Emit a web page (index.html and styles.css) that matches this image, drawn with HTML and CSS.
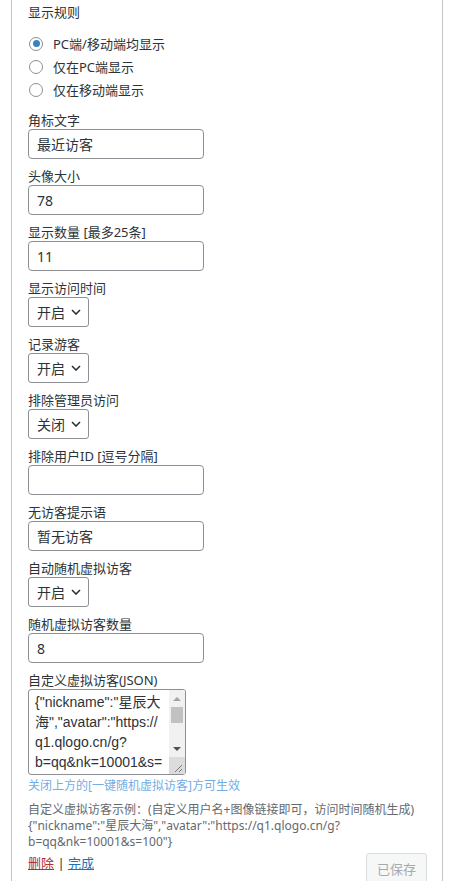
FILE: index.html
```html
<!DOCTYPE html>
<html lang="zh-CN">
<head>
    <meta charset="UTF-8">
    <meta name="viewport" content="width=device-width, initial-scale=1.0">
    <title>最近访客 小工具</title>
    <link rel="stylesheet" href="styles.css">
</head>
<body>
    <div class="widget-inside">
        <div class="title">显示规则</div>
        <div class="radios">
            <label class="radio-row"><input type="radio" name="rule" checked> PC端/移动端均显示</label>
            <label class="radio-row"><input type="radio" name="rule"> 仅在PC端显示</label>
            <label class="radio-row"><input type="radio" name="rule"> 仅在移动端显示</label>
        </div>

        <div class="field">
            <label for="badge">角标文字</label>
            <input type="text" id="badge" value="最近访客">
        </div>
        <div class="field">
            <label for="avatar-size">头像大小</label>
            <input type="text" id="avatar-size" value="78">
        </div>
        <div class="field">
            <label for="count">显示数量 [最多25条]</label>
            <input type="text" id="count" value="11">
        </div>
        <div class="field">
            <label for="show-time">显示访问时间</label>
            <span class="select-wrap">
                <select id="show-time"><option>开启</option><option>关闭</option></select>
                <svg class="chevron" width="10" height="6" viewBox="0 0 10 6"><path d="M1 1 L5 5 L9 1" fill="none" stroke="#2c3338" stroke-width="1.6"/></svg>
            </span>
        </div>
        <div class="field">
            <label for="guests">记录游客</label>
            <span class="select-wrap">
                <select id="guests"><option>开启</option><option>关闭</option></select>
                <svg class="chevron" width="10" height="6" viewBox="0 0 10 6"><path d="M1 1 L5 5 L9 1" fill="none" stroke="#2c3338" stroke-width="1.6"/></svg>
            </span>
        </div>
        <div class="field">
            <label for="exclude-admin">排除管理员访问</label>
            <span class="select-wrap">
                <select id="exclude-admin"><option>关闭</option><option>开启</option></select>
                <svg class="chevron" width="10" height="6" viewBox="0 0 10 6"><path d="M1 1 L5 5 L9 1" fill="none" stroke="#2c3338" stroke-width="1.6"/></svg>
            </span>
        </div>
        <div class="field">
            <label for="exclude-ids">排除用户ID [逗号分隔]</label>
            <input type="text" id="exclude-ids" value="">
        </div>
        <div class="field">
            <label for="empty-text">无访客提示语</label>
            <input type="text" id="empty-text" value="暂无访客">
        </div>
        <div class="field">
            <label for="auto-fake">自动随机虚拟访客</label>
            <span class="select-wrap">
                <select id="auto-fake"><option>开启</option><option>关闭</option></select>
                <svg class="chevron" width="10" height="6" viewBox="0 0 10 6"><path d="M1 1 L5 5 L9 1" fill="none" stroke="#2c3338" stroke-width="1.6"/></svg>
            </span>
        </div>
        <div class="field">
            <label for="fake-count">随机虚拟访客数量</label>
            <input type="text" id="fake-count" value="8">
        </div>
        <div class="field last">
            <label for="fake-json">自定义虚拟访客(JSON)</label>
            <div class="textarea-wrap">
                <textarea id="fake-json">{"nickname":"星辰大海","avatar":"https://&#8203;q1.qlogo.cn/g?b=qq&amp;nk=10001&amp;s=100"},{"nickname":"明月","avatar":"https://&#8203;q1.qlogo.cn/g?b=qq&amp;nk=10002&amp;s=100"}</textarea>
                <!-- the browser hides native scrollbars, so draw the classic one -->
                <div class="scrollbar">
                    <div class="sb-btn"><span class="arrow-up"></span></div>
                    <div class="sb-thumb"></div>
                    <div class="sb-track"></div>
                    <div class="sb-btn"><span class="arrow-down"></span></div>
                    <div class="sb-corner">
                        <svg width="16" height="17" viewBox="0 0 16 17"><path d="M13 8 L6 15 M13 12 L10 15" stroke="#7a7a7a" stroke-width="1"/></svg>
                    </div>
                </div>
            </div>
        </div>
        <div class="hint">关闭上方的[一键随机虚拟访客]方可生效</div>
        <div class="desc">自定义虚拟访客示例：(自定义用户名+图像链接即可，访问时间随机生成)<br>{"nickname":"星辰大海","avatar":"https://q1.qlogo.cn/g?<br>b=qq&amp;nk=10001&amp;s=100"}</div>

        <div class="control-row">
            <div class="links"><a href="#" class="delete">删除</a> | <a href="#" class="done">完成</a></div>
            <button class="save" disabled>已保存</button>
        </div>
    </div>
</body>
</html>
```

FILE: styles.css
```css
body {
    margin: 0;
    background: #fff;
    color: #2c3338;
    font-family: "Noto Sans", "Noto Sans CJK SC", sans-serif;
    font-size: 13px;
}

.widget-inside {
    box-sizing: border-box;
    width: 432px;
    min-height: 881px;
    margin-left: 11px;
    padding: 2px 15px 0 16px;
    border-left: 1px solid #c3c4c7;
    border-right: 1px solid #c3c4c7;
}

.title {
    line-height: 20px;
}

.radios {
    margin: 10px 0 10px;
}

.radio-row {
    display: flex;
    align-items: center;
    height: 23px;
}

.radio-row input {
    appearance: none;
    box-sizing: border-box;
    width: 14px;
    height: 14px;
    margin: 0 10px 0 1px;
    border: 1px solid #8c8f94;
    border-radius: 50%;
    background: #fff;
    display: flex;
    align-items: center;
    justify-content: center;
}

.radio-row input:checked::before {
    content: "";
    width: 7px;
    height: 7px;
    border-radius: 50%;
    background: #3582c4;
}

.field {
    margin-bottom: 8px;
}

.field label {
    display: block;
    line-height: 18px;
}

.field input,
.field select,
.field textarea {
    box-sizing: border-box;
    border: 1px solid #8c8f94;
    border-radius: 4px;
    background: #fff;
    color: #2c3338;
    font-family: inherit;
    font-size: 14px;
}

.field input {
    display: block;
    width: 176px;
    height: 30px;
    padding: 0 8px;
}

.select-wrap {
    position: relative;
    display: inline-block;
    vertical-align: top;
}

.field select {
    display: block;
    appearance: none;
    width: 61px;
    height: 30px;
    padding: 0 20px 0 8px;
    border-radius: 3px;
}

.chevron {
    position: absolute;
    right: 8px;
    top: 12px;
    pointer-events: none;
}

.field.last {
    margin-bottom: 0;
}

.textarea-wrap {
    position: relative;
    width: 158px;
}

.field textarea {
    display: block;
    width: 158px;
    height: 86px;
    padding: 2px 17px 2px 6px;
    font-family: "Liberation Sans", "Noto Sans CJK SC", sans-serif;
    line-height: 20px;
    border-radius: 3px;
    overflow: hidden;
    resize: none;
}

.scrollbar {
    position: absolute;
    top: 1px;
    right: 1px;
    bottom: 1px;
    width: 16px;
    display: flex;
    flex-direction: column;
    background: #f1f1f1;
    border-radius: 0 2px 2px 0;
}

.sb-btn {
    height: 17px;
    display: flex;
    align-items: center;
    justify-content: center;
}

.arrow-up {
    border-left: 4px solid transparent;
    border-right: 4px solid transparent;
    border-bottom: 4px solid #a3a3a3;
}

.arrow-down {
    border-left: 4px solid transparent;
    border-right: 4px solid transparent;
    border-top: 4px solid #505050;
}

.sb-thumb {
    height: 16px;
    margin: 0 2px;
    background: #c1c1c1;
}

.sb-track {
    flex: 1;
}

.sb-corner {
    height: 17px;
    background: #dcdcdc;
}

.sb-corner svg {
    display: block;
}

.hint {
    margin-top: 3px;
    font-size: 12px;
    line-height: 16px;
    color: #72aee6;
}

.desc {
    margin-top: 8px;
    font-size: 12px;
    line-height: 16px;
    color: #646970;
}

.control-row {
    display: flex;
    justify-content: space-between;
    align-items: flex-start;
    margin-top: 3px;
}

.links {
    line-height: 20px;
}

.links a {
    text-decoration: underline;
}

.delete {
    color: #b32d2e;
}

.done {
    color: #2271b1;
}

.save {
    height: 30px;
    padding: 0 10px;
    border: 1px solid #dcdcde;
    border-radius: 3px;
    background: #f6f7f7;
    color: #a7aaad;
    font-family: inherit;
    font-size: 13px;
}
```
